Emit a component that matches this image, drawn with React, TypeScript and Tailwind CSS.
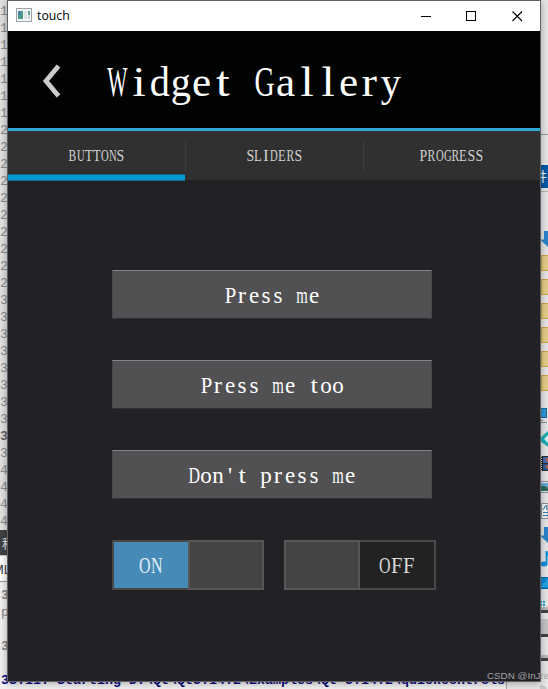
import { ReactNode } from "react";

const GLYPH_WIDTH: Record<string, number> = {
  W: 0.944, m: 0.778, G: 0.722, D: 0.722, O: 0.722, N: 0.722, U: 0.722,
  B: 0.667, R: 0.667, T: 0.611, L: 0.611, E: 0.611, P: 0.556, S: 0.556, F: 0.556,
  I: 0.333, i: 0.278, l: 0.278, t: 0.278, r: 0.333, s: 0.389, e: 0.444, a: 0.444,
};

// Narrow letters get slightly wider serifs
const STRETCH: Record<string, number> = { i: 1.1, l: 1.1, t: 1.15, r: 1.08 };

const GUTTER = [
  ..."1111111".split(""),
  ..."2222222222".split(""),
  ..."3333333333".split(""),
  ..."4444".split(""),
];

// Half-width serif: each letter sits in a fixed cell, wide ones are squeezed to fit
function CellText({ text, size, cell }: { text: string; size: number; cell: number }) {
  return (
    <span className="inline-flex whitespace-pre leading-none" style={{ fontSize: size }}>
      {text.split("").map((ch, i) => {
        const natural = (GLYPH_WIDTH[ch] ?? 0.5) * size;
        const scale = Math.min(STRETCH[ch] ?? 1, (cell * 0.96) / natural);
        return (
          <span key={i} className="inline-flex justify-center" style={{ width: cell }}>
            <span className="shrink-0" style={{ transform: `scaleX(${scale})` }}>{ch}</span>
          </span>
        );
      })}
    </span>
  );
}

function TitleBar() {
  return (
    <div className="flex h-[30px] shrink-0 items-center bg-white text-black">
      <svg width="16" height="14" viewBox="0 0 16 14" className="ml-2 mb-0.5">
        <rect x="0.5" y="0.5" width="15" height="13" fill="#f4f6f7" stroke="#9ba3a8" />
        <rect x="2" y="3" width="5" height="8" fill="#4a9a82" />
        <rect x="2" y="3" width="3" height="4" fill="#527fa8" />
        <rect x="8" y="3" width="3" height="8" fill="#e2e4e6" />
        <rect x="12" y="3" width="2" height="4" fill="#62a98d" />
        <rect x="12" y="7" width="2" height="4" fill="#c9d6d4" />
      </svg>
      <span className="ml-[5px] font-['Open_Sans',sans-serif] text-[12.3px]">touch</span>
      <svg width="106" height="12" viewBox="0 0 106 12" className="mb-px ml-auto mr-[16px]" fill="none" stroke="#000" shapeRendering="crispEdges">
        <path d="M3 6.5h10" />
        <rect x="48.5" y="1.5" width="9" height="9" />
        <path d="M94.5 1.5l9.5 9.5M104 1.5l-9.5 9.5" shapeRendering="auto" strokeWidth="1.1" />
      </svg>
    </div>
  );
}

function Tab({ label, active, divider }: { label: string; active?: boolean; divider?: boolean }) {
  return (
    <div className="flex flex-1 flex-col">
      <div className="flex h-[43px] shrink-0 items-center">
        <div className="flex flex-1 justify-center pt-[7px] text-[#d2d2d2]">
          <CellText text={label} size={16} cell={8} />
        </div>
        {divider && <div className="-mr-px mt-[6px] h-[30px] w-px bg-[#3e3e3e]" />}
      </div>
      {active && <div className="h-[7px] shrink-0 border-y border-[#176a8d] bg-[#0099d1]" />}
    </div>
  );
}

function PushButton({ label }: { label: string }) {
  return (
    <div className="flex h-[49px] w-[320px] items-center justify-center border border-t-[#858387] border-r-[#464648] border-b-[#303033] border-l-[#464648] bg-[#515153] pt-px text-white">
      <CellText text={label} size={23} cell={12} />
    </div>
  );
}

function Toggle({ on }: { on?: boolean }) {
  const knob = <div className="w-[76px] border-2 border-[#575757] bg-[#444]" />;
  return (
    <div className="flex h-[50px] w-[152px]">
      {!on && knob}
      <div
        className={`flex w-[76px] items-center justify-center border-y-2 border-[#484848] pb-px ${
          on ? "border-l-2 bg-[#468bb7] text-[#e4eff6]" : "border-r-2 bg-[#222] text-[#d8d8d8]"
        }`}
      >
        <CellText text={on ? "ON" : "OFF"} size={24} cell={12} />
      </div>
      {on && knob}
    </div>
  );
}

function GalleryWindow() {
  return (
    <div className="absolute top-0 left-[7px] flex h-[682px] w-[534px] flex-col border border-[#626264] bg-[#212126] font-['Liberation_Serif',serif] shadow-[0_1px_8px_rgba(0,0,0,0.35)]">
      <TitleBar />
      <div className="flex h-[100px] shrink-0 items-center border-b-[3px] border-[#30a7d5] bg-[#010202] text-white">
        <svg width="20" height="34" viewBox="0 0 20 34" className="ml-[34px] mt-[3px]" fill="none" stroke="#ccc" strokeWidth="4.8">
          <path d="M16.500 2L4 17L16.500 32" />
        </svg>
        <div className="ml-[45px] mt-[3px]">
          <CellText text="Widget Gallery" size={43} cell={21} />
        </div>
      </div>
      <div className="flex h-[49px] shrink-0 bg-[#303030]">
        <Tab label="BUTTONS" active divider />
        <Tab label="SLIDERS" divider />
        <Tab label="PROGRESS" />
      </div>
      <div className="flex flex-col gap-[41px] pt-[90px] pl-[104px]">
        <PushButton label="Press me" />
        <PushButton label="Press me too" />
        <PushButton label="Don't press me" />
        <div className="flex gap-5">
          <Toggle on />
          <Toggle />
        </div>
      </div>
    </div>
  );
}

function EditorPane() {
  return (
    <div className="flex w-[507px] flex-col overflow-hidden border-r border-[#aaa] bg-[#f2f2f2] font-['Liberation_Mono',monospace]">
      <div className="h-[530px] shrink-0 bg-[#e3e3e3] pt-[3px] text-[13px] leading-[17px] text-[#8c8c8c]">
        {GUTTER.map((n, i) => (
          <div key={i} className={i === 25 ? "font-bold text-[#666]" : ""}>{n}</div>
        ))}
      </div>
      <div className="h-[25px] shrink-0 bg-[#404244] pl-[2px] font-['Noto_Sans_CJK_SC',sans-serif] text-[13px] leading-[26px] text-[#eee]">程</div>
      <div className="h-[27px] shrink-0 border-t border-b border-t-[#ccc] border-b-[#999] bg-white font-['Open_Sans',sans-serif] text-[12px] leading-[28px] text-[#222]">
        <span className="-ml-[7px]">ML</span>
      </div>
      <div className="h-[91px] shrink-0 pt-[5px] pl-px text-[13px] font-bold leading-[17px] text-[#888]">
        <div>3</div>
        <div className="font-normal">p</div>
        <div className="h-[17px]" />
        <div>3</div>
      </div>
      <div className="shrink-0 pl-px text-[13.33px] font-bold leading-[16px] whitespace-pre text-[#0b0b86]">
        {"33:11: Starting D:\\Qt\\Qt5.14.2\\Examples\\Qt-5.14.2\\quickcontrols"}
      </div>
    </div>
  );
}

function Icon({ children }: { children: ReactNode }) {
  return (
    <svg width="8" height="24" viewBox="0 0 8 24" className="block shrink-0">
      {children}
    </svg>
  );
}

function SidePane() {
  return (
    <div className="flex flex-1 flex-col items-end overflow-hidden bg-[#e8e8e8]">
      <div className="h-[135px] w-full shrink-0 border-b border-[#999]" />
      <div className="mt-[30px] flex h-[23px] w-full shrink-0 justify-end overflow-hidden bg-[#0059a8] font-['Noto_Sans_CJK_SC',sans-serif] text-[13px] leading-[22px] text-white">
        <span className="mr-px">井</span>
      </div>
      <div className="mt-[3px] h-px w-full shrink-0 bg-[#bbb]" />
      <div className="mt-[35px]">
        <Icon><path d="M4 4h4v16L0 12.500h4z" fill="#2d85cf" /></Icon>
        {[0, 1, 2, 3, 4, 5].map((i) => (
          <Icon key={i}><rect x="1.5" y="4.500" width="9" height="15" fill="#e6cf8b" stroke="#d0a946" /></Icon>
        ))}
      </div>
      <div className="mt-2">
        <Icon><rect x="-2" y="5.500" width="8.500" height="9" fill="#2999e0" stroke="#246a90" /><path d="M0 17.500h3M1 19.500h6" stroke="#84929b" /></Icon>
        <Icon><path d="M0 11l8-7v16l-8-6z" fill="#1eb2b8" /><path d="M4 12l4-4v8z" fill="#d9efef" /></Icon>
        <Icon><path d="M0 5h8v15H0z" fill="#292929" /><path d="M3 6h5v6H3z" fill="#426fbb" /><path d="M3 13h5v6H3z" fill="#285c9f" /><path d="M5 8l3-1v4zM5 15l3-1v4z" fill="#d36234" /><path d="M1.500 5v15" stroke="#ccc" strokeDasharray="1 1" /></Icon>
        <Icon><path d="M0 6.500h8v11H0" fill="#eee" stroke="#8c9398" /><path d="M0 8h8v7H0z" fill="#62acd6" /><path d="M0 12q4-3 8 1v3H0z" fill="#346b5c" /></Icon>
        <Icon><path d="M1.500 4.500H8v15H1.500z" fill="#fafafa" stroke="#8b9297" /><path d="M3 11l3-5 1 5M3 13.500h5M3 16.500h5" fill="none" stroke="#337fad" /></Icon>
        <Icon><path d="M4 4h4v16L0 12.500h4z" fill="#2d85cf" /></Icon>
        <Icon><path d="M6.500 4v12M7 5v4" stroke="#138fdd" strokeWidth="2" /><ellipse cx="4" cy="17" rx="3.500" ry="2.500" fill="#138fdd" /></Icon>
        <Icon><rect x="-1" y="6.500" width="10" height="11" fill="#1189d4" stroke="#0969a5" /><path d="M0 16l8-8v8z" fill="#27a6e7" /></Icon>
        <Icon><path d="M0 6h2v2H0zM3 6h2v2H3zM0 9h2v2H0zM3 9h2v2H3z" fill="#16b2df" /><path d="M0 12h8v3H0z" fill="#bbb" /><path d="M0 15h8v3H0z" fill="#444" /></Icon>
        <Icon><path d="M0 0h8v15H0z" fill="#c7c7c9" /><path d="M0 15h8v3H0z" fill="#444" /></Icon>
        <Icon><path d="M0 12h8v3H0z" fill="#bbb" /><path d="M0 15h8v3H0z" fill="#444" /></Icon>
        <Icon><ellipse cx="0" cy="22" rx="7" ry="4" fill="#c9c9cc" /></Icon>
      </div>
    </div>
  );
}

export default function App() {
  return (
    <div className="relative flex h-[689px] w-[548px] overflow-hidden">
      <EditorPane />
      <SidePane />
      <GalleryWindow />
      <span className="absolute top-[669px] left-[487px] font-['Liberation_Sans',sans-serif] text-[9.8px] leading-[14px] whitespace-nowrap text-[#a2a2a6]">
        CSDN @InJre
      </span>
    </div>
  );
}
